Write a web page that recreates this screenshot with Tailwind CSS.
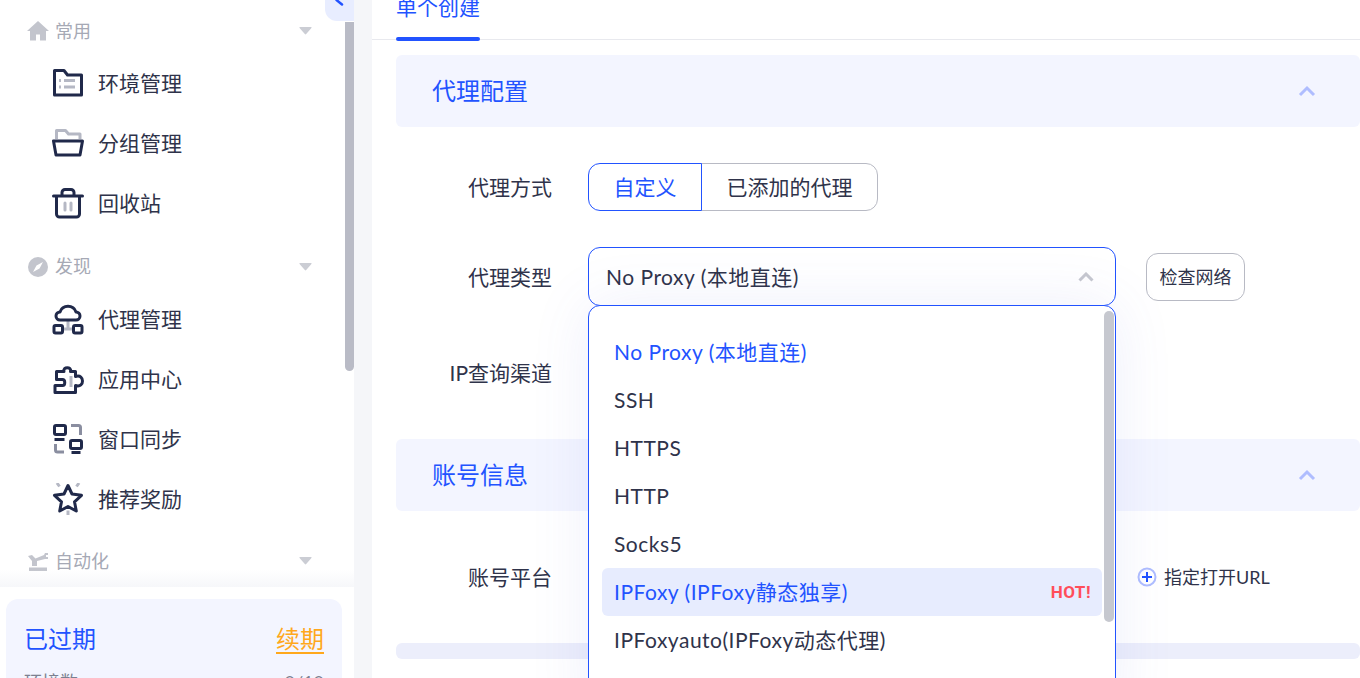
<!DOCTYPE html>
<html lang="zh-CN">
<head>
  <meta charset="UTF-8" />
  <title>新建环境</title>
  <script src="https://cdn.jsdelivr.net/npm/@tailwindcss/browser@4"></script>
</head>
<body class="bg-white text-[#2f334a] font-['Lato','Noto_Sans_CJK_SC',sans-serif]">
<div class="flex h-[678px] w-[1360px] overflow-hidden">

  <!-- Sidebar -->
  <aside class="relative w-[354px] h-full shrink-0 bg-white overflow-hidden">
    <nav class="pt-[9px]">
      <!-- 常用 -->
      <div class="flex items-center h-[44px] pl-[27px] pr-[42px] text-[18px] text-[#a6a9b5]">
        <svg class="w-[22px] h-[22px] shrink-0" viewBox="0 0 22 22" fill="#c3c5cd"><path d="M11 1 0 11h3v9.500h6v-6h4v6h6V11h3z"/></svg>
        <span class="ml-[6px] flex-1">常用</span>
        <svg class="w-[13px] h-[8px]" viewBox="0 0 13 8" fill="#cbcdd4"><path d="M1 0h11q1 0 .4 1L7.200 7q-.7.800-1.400 0L.6 1Q0 0 1 0z"/></svg>
      </div>
      <a class="flex items-center h-[60px] pl-[52px] gap-[14px] text-[21px]">
        <svg class="w-[32px] h-[32px] shrink-0" viewBox="0 0 32 32" fill="none" stroke-width="3"><path d="M2.500 3.500H12l3.500 4.500h14v20h-27z" stroke="#20294a" stroke-linejoin="round"/><path d="M7 13.500h2M12 13.500h11M7 20h2M12 20h11" stroke="#b5b8c4" stroke-width="3"/></svg>
        <span>环境管理</span>
      </a>
      <a class="flex items-center h-[60px] pl-[52px] gap-[14px] text-[21px]">
        <svg class="w-[32px] h-[32px] shrink-0" viewBox="0 0 32 32" fill="none" stroke-width="3"><path d="M4.500 12V3.500h9l3 3.500h11.500v5" stroke="#b5b8c4" stroke-linejoin="round"/><path d="M1.500 14h29l-2.500 14H4z" stroke="#20294a" stroke-linejoin="round"/></svg>
        <span>分组管理</span>
      </a>
      <a class="flex items-center h-[60px] pl-[52px] gap-[14px] text-[21px]">
        <svg class="w-[32px] h-[32px] shrink-0" viewBox="0 0 32 32" fill="none" stroke-width="3" stroke-linecap="round"><path d="M1.500 9h29M10 9V5.500a3 3 0 0 1 3-3h6a3 3 0 0 1 3 3V9M4.500 9v18a3 3 0 0 0 3 3h17a3 3 0 0 0 3-3V9" stroke="#20294a"/><path d="M13 16v7M19 16v7" stroke="#b5b8c4"/></svg>
        <span>回收站</span>
      </a>

      <!-- 发现 -->
      <div class="flex items-center h-[45px] mt-[11px] pl-[27px] pr-[42px] text-[18px] text-[#a6a9b5]">
        <svg class="w-[22px] h-[22px] shrink-0" viewBox="0 0 22 22"><circle cx="11" cy="11" r="10" fill="#c3c5cd"/><path d="M16 6 12.500 12.500 6 16 9.500 9.500z" fill="#fff"/></svg>
        <span class="ml-[6px] flex-1">发现</span>
        <svg class="w-[13px] h-[8px]" viewBox="0 0 13 8" fill="#cbcdd4"><path d="M1 0h11q1 0 .4 1L7.200 7q-.7.800-1.400 0L.6 1Q0 0 1 0z"/></svg>
      </div>
      <a class="flex items-center h-[60px] pl-[52px] gap-[14px] text-[21px]">
        <svg class="w-[32px] h-[32px] shrink-0" viewBox="0 0 32 32" fill="none" stroke-width="3"><path d="M11 26h10M16 18v8" stroke="#b5b8c4"/><path d="M8 17a4 4 0 0 1 0-8A8.500 8.500 0 0 1 24 9a4 4 0 0 1 0 8z" stroke="#20294a" stroke-linejoin="round"/><rect x="2" y="22.500" width="8.500" height="7.500" rx="1.500" stroke="#20294a"/><rect x="21.500" y="22.500" width="8.500" height="7.500" rx="1.500" stroke="#20294a"/></svg>
        <span>代理管理</span>
      </a>
      <a class="flex items-center h-[60px] pl-[52px] gap-[14px] text-[21px]">
        <svg class="w-[32px] h-[32px] shrink-0" viewBox="0 0 32 32" fill="none" stroke-width="3"><path d="M3 29.500H23.500v-7c5 1.500 7-1.500 7-4.500s-2-6-7-4.500V8.500H18.500c1.500-5-8-5-6.500 0H4.500v8h6c3 0 3 6 0 6H3z" stroke="#20294a" stroke-linejoin="round"/><path d="M19 13v11" stroke="#b5b8c4"/></svg>
        <span>应用中心</span>
      </a>
      <a class="flex items-center h-[60px] pl-[52px] gap-[14px] text-[21px]">
        <svg class="w-[32px] h-[32px] shrink-0" viewBox="0 0 32 32" fill="none" stroke-width="3"><rect x="2.500" y="2.500" width="11" height="9" rx="1.500" stroke="#20294a"/><path d="M2.500 16.500h10" stroke="#20294a"/><path d="M19 2.500h7.500a2 2 0 0 1 2 2V12M3.500 21v6a2 2 0 0 0 2 2H12" stroke="#8a8ea0"/><rect x="18.500" y="17.500" width="11" height="8" rx="1.500" stroke="#20294a"/><path d="M19.500 29.500h9" stroke="#20294a"/></svg>
        <span>窗口同步</span>
      </a>
      <a class="flex items-center h-[60px] pl-[52px] gap-[14px] text-[21px]">
        <svg class="w-[32px] h-[32px] shrink-0" viewBox="0 0 32 32" fill="none" stroke-width="3"><path d="M16 2.500l4 8.500 9.500 1.300-7 6.500 1.800 9.200L16 23.500l-8.300 4.500 1.800-9.200-7-6.500L12 11z" stroke="#20294a" stroke-linejoin="round"/><path d="M5 0l2.500 3.500M27 0l-2.500 3.500M16 27.500v4.500" stroke="#b5b8c4"/></svg>
        <span>推荐奖励</span>
      </a>

      <!-- 自动化 -->
      <div class="flex items-center h-[44px] mt-[10px] pl-[27px] pr-[42px] text-[18px] text-[#a6a9b5]">
        <svg class="w-[22px] h-[22px] shrink-0" viewBox="0 0 22 22" fill="#c3c5cd"><path d="M1 6l4-1 3.500 3.500L17 5l1-2h3v2h-2v2h2v2h-3L10 11v5H5v-5zM2 17.500h18V21H2z"/></svg>
        <span class="ml-[6px] flex-1">自动化</span>
        <svg class="w-[13px] h-[8px]" viewBox="0 0 13 8" fill="#cbcdd4"><path d="M1 0h11q1 0 .4 1L7.200 7q-.7.800-1.400 0L.6 1Q0 0 1 0z"/></svg>
      </div>
    </nav>

    <!-- collapse button and scrollbar lie over the sidebar -->
    <div class="absolute right-0 top-[22px] w-[9px] h-[349px] bg-[#b9bbc6] rounded-b-full"></div>
    <div class="absolute right-0 top-0 w-[29px] h-[21px] bg-[#e8edff] rounded-bl-[12px] flex justify-center">
      <svg class="w-[14px] h-[10px]" viewBox="0 0 14 10" fill="none"><path d="M3.500 0l5.500 4.500" stroke="#2253ff" stroke-width="2.500" stroke-linecap="round"/></svg>
    </div>

    <!-- expiry card pinned to the bottom -->
    <div class="absolute left-0 right-0 bottom-0">
      <div class="h-[17px] bg-gradient-to-b from-white/0 to-[#f6f7fa]"></div>
      <div class="bg-white h-[91px] pt-[12px] pl-[6px] pr-[12px]">
        <div class="bg-[#f3f5ff] rounded-[12px] h-[120px] px-[18px] pt-[22px]">
          <div class="flex justify-between items-center h-[36px] text-[24px]">
            <span class="text-[#2253ff]">已过期</span>
            <span class="text-[#ffa81c] underline decoration-2 underline-offset-[4px]">续期</span>
          </div>
          <div class="flex justify-between items-center mt-[12px] text-[18px] text-[#7c8090]">
            <span>环境数</span>
            <span>0/10</span>
          </div>
        </div>
      </div>
    </div>
  </aside>

  <div class="w-[18px] h-full shrink-0 bg-[#f5f6f9]"></div>

  <!-- Main -->
  <main class="relative flex-1 min-w-0 bg-white">
    <div class="flex items-start h-[40px] border-b border-[#e8e9ee] pl-[24px]">
      <div class="w-[84px] -mt-[7px] flex flex-col">
        <span class="h-[28px] leading-[28px] text-[21px] text-[#2253ff] whitespace-nowrap">单个创建</span>
        <span class="mt-[16px] h-[4px] rounded-full bg-[#2253ff]"></span>
      </div>
    </div>

    <div class="pl-[24px]">
      <section class="mt-[15px] h-[72px] rounded-[6px] bg-[#f3f5ff] pl-[36px] pr-[44px] flex items-center justify-between">
        <h2 class="text-[24px] text-[#2253ff]">代理配置</h2>
        <svg class="w-[18px] h-[12px]" viewBox="0 0 18 12" fill="none"><path d="M2 10l7-7 7 7" stroke="#afbdff" stroke-width="3"/></svg>
      </section>

      <div class="flex items-center h-[48px] mt-[36px]">
        <label class="w-[156px] text-right text-[21px]">代理方式</label>
        <div class="ml-[36px] flex h-full text-[21px]">
          <button class="w-[114px] border border-[#2253ff] rounded-l-[12px] text-[#2253ff] relative z-10">自定义</button>
          <button class="w-[177px] -ml-px border border-[#b8bac4] rounded-r-[12px]">已添加的代理</button>
        </div>
      </div>

      <div class="flex items-center h-[59px] mt-[36px]">
        <label class="w-[156px] text-right text-[21px]">代理类型</label>
        <div class="ml-[36px] w-[528px] h-full border-[1.5px] border-[#2253ff] rounded-[12px] pl-[17px] pr-[21px] flex items-center justify-between text-[21px] tracking-[0.5px]">
          <span>No Proxy (本地直连)</span>
          <svg class="w-[16px] h-[10px]" viewBox="0 0 16 10" fill="none"><path d="M1.500 8.500 8 2l6.500 6.500" stroke="#c6c8cf" stroke-width="3"/></svg>
        </div>
        <button class="ml-[30px] mt-px w-[99px] h-[48px] border border-[#b8bac4] rounded-[12px] text-[18px]">检查网络</button>
      </div>

      <div class="flex items-center h-[48px] mt-[43px]">
        <label class="w-[156px] text-right text-[21px]">IP查询渠道</label>
      </div>

      <section class="mt-[42px] h-[72px] rounded-[6px] bg-[#f3f5ff] pl-[36px] pr-[44px] flex items-center justify-between">
        <h2 class="text-[24px] text-[#2253ff]">账号信息</h2>
        <svg class="w-[18px] h-[12px]" viewBox="0 0 18 12" fill="none"><path d="M2 10l7-7 7 7" stroke="#afbdff" stroke-width="3"/></svg>
      </section>

      <div class="flex items-center h-[48px] mt-[42px]">
        <label class="w-[156px] text-right text-[21px]">账号平台</label>
        <div class="ml-[36px] w-[528px]"></div>
        <a class="ml-[21px] flex items-center gap-[7px] text-[18px]">
          <svg class="w-[20px] h-[20px]" viewBox="0 0 20 20" fill="none"><circle cx="10" cy="10" r="8.500" stroke="#afbdff" stroke-width="2"/><path d="M10 5v10M5 10h10" stroke="#2253ff" stroke-width="2"/></svg>
          <span>指定打开URL</span>
        </a>
      </div>

      <section class="mt-[42px] h-[16px] rounded-[6px] bg-[#eceefb]"></section>
    </div>

    <!-- open dropdown lies over the form -->
    <div class="absolute left-[216px] top-[305px] w-[528px] h-[420px] bg-white border border-[#2253ff] rounded-t-[12px] pt-[22px] px-[13px] text-[21px] tracking-[0.5px] shadow-[0_0_60px_rgba(90,100,220,0.1)]">
      <div class="h-[48px] flex items-center px-[12px] text-[#2253ff]">No Proxy (本地直连)</div>
      <div class="h-[48px] flex items-center px-[12px]">SSH</div>
      <div class="h-[48px] flex items-center px-[12px]">HTTPS</div>
      <div class="h-[48px] flex items-center px-[12px]">HTTP</div>
      <div class="h-[48px] flex items-center px-[12px]">Socks5</div>
      <div class="h-[48px] flex items-center justify-between pl-[12px] pr-[11px] rounded-[6px] bg-[#e7ecfe] text-[#2253ff]">
        <span>IPFoxy (IPFoxy静态独享)</span>
        <span class="mt-px font-['Roboto'] text-[17px] font-bold tracking-[0.5px] text-[#ff4d5a]">HOT!</span>
      </div>
      <div class="h-[48px] flex items-center px-[12px]">IPFoxyauto(IPFoxy动态代理)</div>
      <div class="absolute right-[1px] top-[5px] w-[10px] h-[311px] rounded-full bg-[#c6c8cf]"></div>
    </div>
  </main>
</div>
</body>
</html>
